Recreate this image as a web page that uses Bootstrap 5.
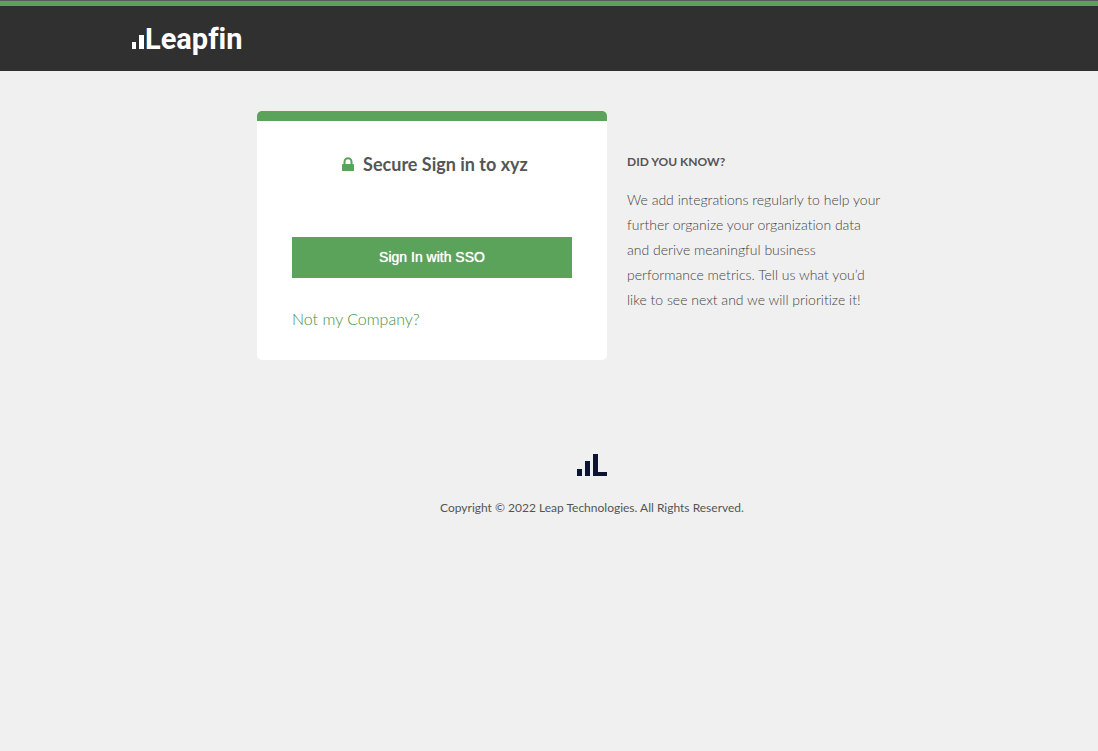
<!DOCTYPE html>
<html lang="en">
<head>
<meta charset="utf-8">
<meta name="viewport" content="width=device-width, initial-scale=1">
<title>Leapfin - Sign in</title>
<link href="https://cdn.jsdelivr.net/npm/bootstrap@5.3.0/dist/css/bootstrap.min.css" rel="stylesheet">
<style>
  :root { --leap-green: #5ba25a; }
  body { background: #f0f0f0; font-family: Lato, "Liberation Sans", sans-serif; font-variant-ligatures: none; color: #555; }
  .top-line { height: 1px; background: #5a5a5a; }
  .site-header { background: #303030; border-top: 5px solid var(--leap-green); }
  .page-gutter { padding-left: 86px; }
  .page-inner { max-width: 920px; }
  .site-header .page-inner { height: 65px; }
  .brand { font: 700 29px/32px Roboto, "Liberation Sans", sans-serif; font-variant-ligatures: none; color: #fff; }
  .signin-group { max-width: 670px; padding-top: 40px; column-gap: 20px; }
  .signin-box { width: 350px; max-width: 100%; border-top: 10px solid var(--leap-green); border-radius: 5px; padding: 28px 35px 26px; }
  .signin-title { font-size: 18px; line-height: 30px; color: #555; padding-left: 6px; column-gap: 9px; }
  .btn-sso { background: var(--leap-green); color: #fff; border: 0; border-radius: 0; height: 41px; margin-top: 58px; padding: 0 12px 2px; font: 14px/20px "Liberation Sans", Arial, sans-serif; text-shadow: 0 0 1px #fff; }
  .btn-sso:hover { background: #4d914c; color: #fff; }
  .company-link { color: #459144; font-size: 16px; font-weight: 300; line-height: 30px; margin-top: 26px; }
  .tips { width: 300px; padding: 41px 44px 0 0; }
  .tips h2 { font-size: 12px; line-height: 20px; font-weight: 700; color: #555; margin-bottom: 15px; }
  .tips p { font-size: 14px; line-height: 25px; font-weight: 300; color: #444; }
  .site-footer { margin-top: 94px; font-size: 12px; line-height: 20px; color: #555; row-gap: 22px; }
</style>
</head>
<body>
<div class="top-line"></div>
<header class="site-header page-gutter">
  <div class="page-inner mx-auto d-flex align-items-center">
    <a class="brand d-flex text-decoration-none" href="#">
      <svg width="13" height="32" viewBox="0 0 13 32" fill="#fff" aria-hidden="true"><path d="M0 19h4v7H0zM7 12h5v14H7z"/></svg>
      <span>Leapfin</span>
    </a>
  </div>
</header>
<div class="page-gutter">
  <main class="signin-group mx-auto d-flex flex-wrap flex-md-nowrap">
    <section class="signin-box bg-white flex-shrink-0">
      <h1 class="signin-title fw-bold mb-0 d-flex justify-content-center align-items-center">
        <svg width="12" height="15" viewBox="0 0 12 15" fill="#5ba25a" aria-hidden="true"><path fill-rule="evenodd" d="M1.500 7V4.700a4.500 4.500 0 0 1 9 0V7h.6c.5 0 .9.4.9.9v5.500c0 .4-.3.600-.7.600H.7c-.4 0-.7-.2-.7-.6V7.900c0-.5.4-.9.9-.9zM3.500 7h5V4.700a2.500 2.500 0 0 0-5 0z"/></svg>
        <span>Secure Sign in to xyz</span>
      </h1>
      <button type="button" class="btn btn-sso w-100">Sign In with SSO</button>
      <a class="company-link d-block text-decoration-none" href="#">Not my Company?</a>
    </section>
    <aside class="tips">
      <h2>DID YOU KNOW?</h2>
      <p class="mb-0">We add integrations regularly to help your further organize your organization data and derive meaningful business performance metrics. Tell us what you’d like to see next and we will prioritize it!</p>
    </aside>
  </main>
  <footer class="site-footer d-flex flex-column align-items-center">
    <svg width="30" height="22" viewBox="0 0 30 22" fill="#0b1430" aria-label="Leapfin" role="img"><path d="M0 15h5v7H0zM8 7h5v15H8zM16 0h5v18h9v4H16z"/></svg>
    <div>Copyright © 2022 Leap Technologies. All Rights Reserved.</div>
  </footer>
</div>
<script src="https://cdn.jsdelivr.net/npm/bootstrap@5.3.0/dist/js/bootstrap.bundle.min.js"></script>
</body>
</html>
